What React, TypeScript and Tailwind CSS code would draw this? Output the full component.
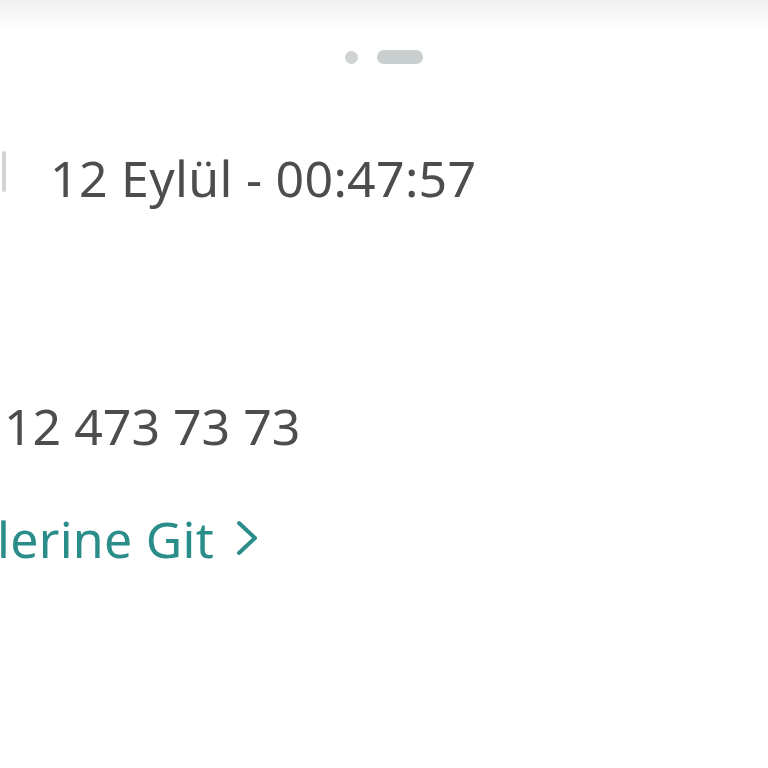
export default function App() {
  return (
    <div
      className="relative w-[768px] h-[768px] overflow-hidden bg-white text-[#4d4d4d]"
      style={{ fontFamily: '"Noto Sans", sans-serif' }}
    >
      {/* top shade */}
      <div className="h-[32px] bg-gradient-to-b from-[#f1f1f1] to-white" />

      {/* page indicator */}
      <div className="flex items-center justify-center gap-[19px] mt-[18px]">
        <div className="w-[13px] h-[13px] rounded-full bg-[#cfd3d3]" />
        <div className="w-[46px] h-[14px] rounded-full bg-[#c9cece]" />
      </div>

      {/* date row */}
      <div className="flex items-center mt-[89px] h-[50px]">
        <div className="w-[4px] h-[41px] ml-[2px] -mt-[14px] bg-[#d4d4d4] rounded-sm" />
        <span className="ml-[44px] text-[50px] leading-none tracking-[0.3px]">
          12 Eylül - 00:47:57
        </span>
      </div>

      {/* phone */}
      <div className="mt-[198px] pl-[4px] text-[50px] leading-none">12 473 73 73</div>

      {/* link */}
      <div className="flex items-center mt-[63px] -ml-[3px] text-[50px] leading-none text-[#2a8d8a]">
        <span className="tracking-[0.3px]">lerine Git</span>
        <svg
          className="ml-[20px] mt-[-2px]"
          width="26"
          height="38"
          viewBox="0 0 26 38"
          fill="none"
          stroke="currentColor"
          strokeWidth="4"
          strokeLinecap="round"
          strokeLinejoin="round"
        >
          <path d="M5 4 L21 19 L5 34" />
        </svg>
      </div>
    </div>
  );
}
